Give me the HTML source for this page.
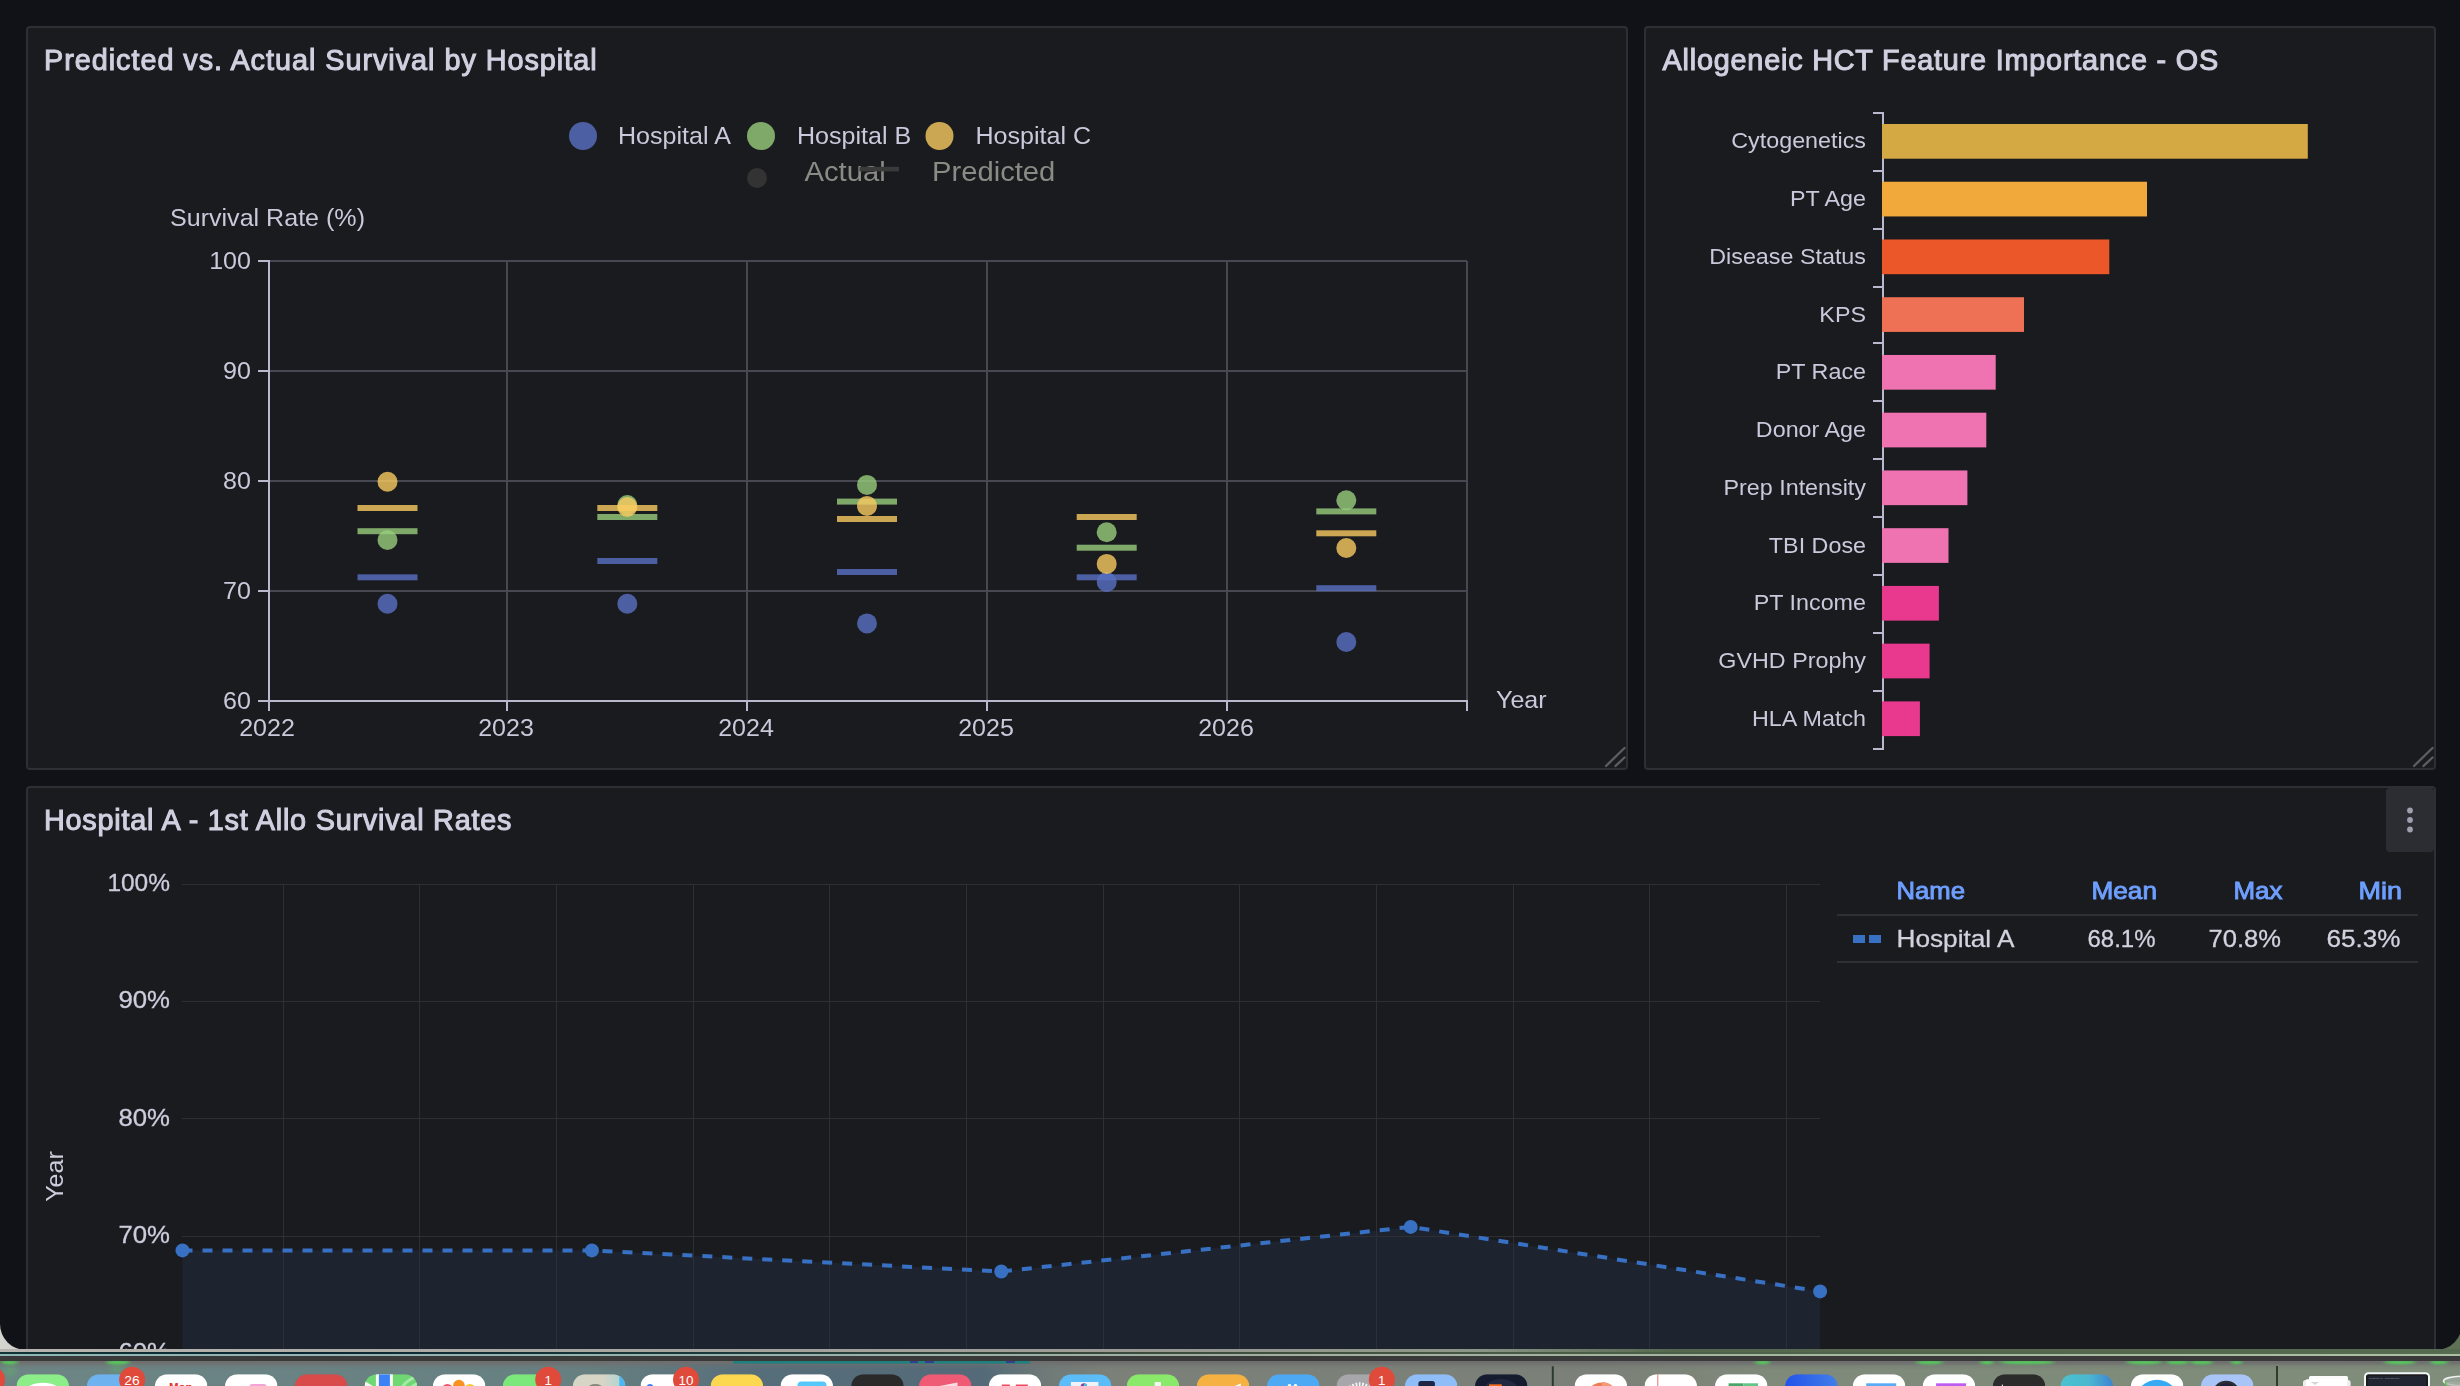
<!DOCTYPE html>
<html lang="en">
<head>
<meta charset="utf-8">
<title>Survival Dashboard</title>
<style>
  html, body { margin: 0; padding: 0; }
  body {
    width: 2460px; height: 1386px; overflow: hidden; position: relative;
    background: #6f7f79;
    font-family: "Liberation Sans", sans-serif;
    color: #ccccdc;
  }
  /* desktop strip visible under the browser window */
  #desk {
    position: absolute; left: 0; top: 1300px; width: 2460px; height: 56px;
    background: linear-gradient(90deg, #d3d3cf 0px, #c9c9c4 60px, #a7aaa4 300px, #8f9a94 700px, #6f8582 1100px, #66786f 1500px, #56694f 1900px, #5d7157 2460px);
  }
  #win {
    position: absolute; left: 0; top: 0; width: 2462px; height: 1349.5px;
    background: #111217; overflow: hidden;
    border-radius: 0 0 26px 26px;
    will-change: transform;
  }
  .panel {
    position: absolute; box-sizing: border-box;
    background: #1a1b1f; border: 2px solid #2d2f34; border-radius: 4px;
  }
  .ptitle {
    position: absolute; left: 16px; top: 15px; white-space: nowrap;
    font-size: 28.8px; font-weight: 400; line-height: 34px; color: #d0d0e0;
    -webkit-text-stroke: 1.05px #d0d0e0; paint-order: stroke fill;
  }
  #t1 { letter-spacing: 0.97px; }
  #t2 { letter-spacing: 0.80px; margin-left: 0.5px; }
  #t3 { letter-spacing: 0.78px; }
  svg { position: absolute; left: 0; top: 0; overflow: visible; }
  svg text { font-family: "Liberation Sans", sans-serif; }
</style>
</head>
<body>
<div id="desk"></div>
<div id="win">

  <!-- PANEL 1 -->
  <div class="panel" id="p1" style="left:26px;top:26px;width:1602px;height:744px">
    <div class="ptitle" id="t1">Predicted vs. Actual Survival by Hospital</div>
    <!--P1S-->
<svg id="s1" style="left:-28px;top:-28px" width="2460" height="1386" viewBox="0 0 2460 1386">
<g stroke="#484852" stroke-width="2" shape-rendering="crispEdges">
<line x1="507" y1="261" x2="507" y2="701"/>
<line x1="747" y1="261" x2="747" y2="701"/>
<line x1="987" y1="261" x2="987" y2="701"/>
<line x1="1227" y1="261" x2="1227" y2="701"/>
<line x1="1467" y1="261" x2="1467" y2="701"/>
<line x1="269" y1="261" x2="1467" y2="261"/>
<line x1="269" y1="371" x2="1467" y2="371"/>
<line x1="269" y1="481" x2="1467" y2="481"/>
<line x1="269" y1="591" x2="1467" y2="591"/>
</g>
<g stroke="#b9b9cd" stroke-width="2" shape-rendering="crispEdges">
<line x1="269" y1="260" x2="269" y2="702"/>
<line x1="268" y1="701" x2="1468" y2="701"/>
<line x1="258" y1="261" x2="268" y2="261"/>
<line x1="258" y1="371" x2="268" y2="371"/>
<line x1="258" y1="481" x2="268" y2="481"/>
<line x1="258" y1="591" x2="268" y2="591"/>
<line x1="258" y1="701" x2="268" y2="701"/>
<line x1="269" y1="701" x2="269" y2="711"/>
<line x1="507" y1="701" x2="507" y2="711"/>
<line x1="747" y1="701" x2="747" y2="711"/>
<line x1="987" y1="701" x2="987" y2="711"/>
<line x1="1227" y1="701" x2="1227" y2="711"/>
<line x1="1467" y1="701" x2="1467" y2="711"/>
</g>
<g fill="#c9c9db">
<text transform="translate(251,269.1) scale(1.045,1)" font-size="24" text-anchor="end">100</text>
<text transform="translate(251,379.1) scale(1.045,1)" font-size="24" text-anchor="end">90</text>
<text transform="translate(251,489.1) scale(1.045,1)" font-size="24" text-anchor="end">80</text>
<text transform="translate(251,599.1) scale(1.045,1)" font-size="24" text-anchor="end">70</text>
<text transform="translate(251,709.1) scale(1.045,1)" font-size="24" text-anchor="end">60</text>
<text transform="translate(267,735.7) scale(1.045,1)" font-size="24" text-anchor="middle">2022</text>
<text transform="translate(506,735.7) scale(1.045,1)" font-size="24" text-anchor="middle">2023</text>
<text transform="translate(746,735.7) scale(1.045,1)" font-size="24" text-anchor="middle">2024</text>
<text transform="translate(986,735.7) scale(1.045,1)" font-size="24" text-anchor="middle">2025</text>
<text transform="translate(1226,735.7) scale(1.045,1)" font-size="24" text-anchor="middle">2026</text>
<text transform="translate(170,225.7) scale(1.045,1)" font-size="24">Survival Rate (%)</text>
<text transform="translate(1496,707.5) scale(1.045,1)" font-size="24">Year</text>
</g>
<g fill="#c9c9db">
<circle cx="583" cy="136" r="14" fill="#5971c4" fill-opacity=".8"/><text transform="translate(618,143.8) scale(1.045,1)" font-size="24">Hospital A</text>
<circle cx="761" cy="136" r="14" fill="#97cd7c" fill-opacity=".8"/><text transform="translate(797,143.8) scale(1.045,1)" font-size="24">Hospital B</text>
<circle cx="939.5" cy="136" r="14" fill="#f9ca60" fill-opacity=".8"/><text transform="translate(975.5,143.8) scale(1.045,1)" font-size="24">Hospital C</text>
</g>
<g fill="#8b8b86">
<circle cx="757" cy="178" r="10" fill="#333333"/><text transform="translate(804.5,181.3) scale(1.043,1)" font-size="28">Actual</text>
<rect x="859.5" y="166.8" width="39.5" height="4.6" fill="#3a3a3a"/><text transform="translate(932,181.3) scale(1.043,1)" font-size="28">Predicted</text>
</g>
<g fill-opacity=".8">
<rect x="357.5" y="574.3" width="60" height="6" fill="#5971c4"/>
<circle cx="387.5" cy="603.7" r="10" fill="#5971c4"/>
<rect x="357.5" y="528.2" width="60" height="6" fill="#97cd7c"/>
<circle cx="387.5" cy="540.0" r="10" fill="#97cd7c"/>
<rect x="357.5" y="505.0" width="60" height="6" fill="#f9ca60"/>
<circle cx="387.5" cy="481.8" r="10" fill="#f9ca60"/>
<rect x="597.3" y="558.0" width="60" height="6" fill="#5971c4"/>
<circle cx="627.3" cy="603.7" r="10" fill="#5971c4"/>
<rect x="597.3" y="514.0" width="60" height="6" fill="#97cd7c"/>
<circle cx="627.3" cy="505.0" r="10" fill="#97cd7c"/>
<rect x="597.3" y="505.0" width="60" height="6" fill="#f9ca60"/>
<circle cx="627.3" cy="507.0" r="10" fill="#f9ca60"/>
<rect x="837.0" y="569.0" width="60" height="6" fill="#5971c4"/>
<circle cx="867.0" cy="623.4" r="10" fill="#5971c4"/>
<rect x="837.0" y="498.6" width="60" height="6" fill="#97cd7c"/>
<circle cx="867.0" cy="484.9" r="10" fill="#97cd7c"/>
<rect x="837.0" y="516.0" width="60" height="6" fill="#f9ca60"/>
<circle cx="867.0" cy="505.9" r="10" fill="#f9ca60"/>
<rect x="1076.7" y="574.3" width="60" height="6" fill="#5971c4"/>
<circle cx="1106.7" cy="582.0" r="10" fill="#5971c4"/>
<rect x="1076.7" y="544.7" width="60" height="6" fill="#97cd7c"/>
<circle cx="1106.7" cy="532.2" r="10" fill="#97cd7c"/>
<rect x="1076.7" y="514.0" width="60" height="6" fill="#f9ca60"/>
<circle cx="1106.7" cy="563.9" r="10" fill="#f9ca60"/>
<rect x="1316.3" y="585.2" width="60" height="6" fill="#5971c4"/>
<circle cx="1346.3" cy="642.0" r="10" fill="#5971c4"/>
<rect x="1316.3" y="508.4" width="60" height="6" fill="#97cd7c"/>
<circle cx="1346.3" cy="500.2" r="10" fill="#97cd7c"/>
<rect x="1316.3" y="530.3" width="60" height="6" fill="#f9ca60"/>
<circle cx="1346.3" cy="548.0" r="10" fill="#f9ca60"/>
</g>
<g stroke="#5b5d62" stroke-width="2.4" stroke-linecap="round"><line x1="1606" y1="766" x2="1624.5" y2="748"/><line x1="1615.5" y1="766" x2="1624.5" y2="757.5"/></g>
</svg>
<!--P1E-->
  </div>

  <!-- PANEL 2 -->
  <div class="panel" id="p2" style="left:1644px;top:26px;width:792px;height:744px">
    <div class="ptitle" id="t2">Allogeneic HCT Feature Importance - OS</div>
    <!--P2S-->
<svg id="s2" style="left:-1646px;top:-28px" width="2460" height="1386" viewBox="0 0 2460 1386">
<g stroke="#b9b9cd" stroke-width="2" shape-rendering="crispEdges">
<line x1="1883" y1="112" x2="1883" y2="750"/>
<line x1="1873" y1="113" x2="1883" y2="113"/>
<line x1="1873" y1="171" x2="1883" y2="171"/>
<line x1="1873" y1="229" x2="1883" y2="229"/>
<line x1="1873" y1="287" x2="1883" y2="287"/>
<line x1="1873" y1="343" x2="1883" y2="343"/>
<line x1="1873" y1="401" x2="1883" y2="401"/>
<line x1="1873" y1="459" x2="1883" y2="459"/>
<line x1="1873" y1="517" x2="1883" y2="517"/>
<line x1="1873" y1="575" x2="1883" y2="575"/>
<line x1="1873" y1="633" x2="1883" y2="633"/>
<line x1="1873" y1="691" x2="1883" y2="691"/>
<line x1="1873" y1="749" x2="1883" y2="749"/>
</g>
<rect x="1882" y="124.00" width="425.8" height="34.7" fill="#d4a843"/>
<rect x="1882" y="181.74" width="265.0" height="34.7" fill="#f2a93b"/>
<rect x="1882" y="239.48" width="227.3" height="34.7" fill="#ec5729"/>
<rect x="1882" y="297.22" width="142.0" height="34.7" fill="#ee7156"/>
<rect x="1882" y="354.96" width="113.7" height="34.7" fill="#ee73b0"/>
<rect x="1882" y="412.70" width="104.3" height="34.7" fill="#ee73b0"/>
<rect x="1882" y="470.44" width="85.4" height="34.7" fill="#ee73b0"/>
<rect x="1882" y="528.18" width="66.5" height="34.7" fill="#ee73b0"/>
<rect x="1882" y="585.92" width="56.9" height="34.7" fill="#e9398f"/>
<rect x="1882" y="643.66" width="47.6" height="34.7" fill="#e9398f"/>
<rect x="1882" y="701.40" width="37.9" height="34.7" fill="#e9398f"/>
<g fill="#c9c9db" font-size="22.7" text-anchor="end">
<text transform="translate(1866,148.4) scale(1.027,1)">Cytogenetics</text>
<text transform="translate(1866,206.2) scale(1.027,1)">PT Age</text>
<text transform="translate(1866,263.9) scale(1.027,1)">Disease Status</text>
<text transform="translate(1866,321.7) scale(1.027,1)">KPS</text>
<text transform="translate(1866,379.4) scale(1.027,1)">PT Race</text>
<text transform="translate(1866,437.1) scale(1.027,1)">Donor Age</text>
<text transform="translate(1866,494.9) scale(1.027,1)">Prep Intensity</text>
<text transform="translate(1866,552.6) scale(1.027,1)">TBI Dose</text>
<text transform="translate(1866,610.4) scale(1.027,1)">PT Income</text>
<text transform="translate(1866,668.1) scale(1.027,1)">GVHD Prophy</text>
<text transform="translate(1866,725.9) scale(1.027,1)">HLA Match</text>
</g>
<g stroke="#5b5d62" stroke-width="2.4" stroke-linecap="round"><line x1="2414" y1="766" x2="2432.5" y2="748"/><line x1="2423.5" y1="766" x2="2432.5" y2="757.5"/></g>
</svg>
<!--P2E-->
  </div>

  <!-- PANEL 3 -->
  <div class="panel" id="p3" style="left:26px;top:786px;width:2410px;height:620px">
    <div class="ptitle" id="t3">Hospital A - 1st Allo Survival Rates</div>
    <!--P3S-->
<svg id="s3" style="left:-28px;top:-788px" width="2460" height="1386" viewBox="0 0 2460 1386">
<polygon points="182.5,1250.4 591.9,1250.4 1001.3,1271.5 1410.7,1226.9 1820.1,1291.4 1820.1,1400 182.5,1400" fill="#3871c4" fill-opacity=".1"/>
<g fill="#2d2f34" shape-rendering="crispEdges">
<rect x="182" y="884" width="1638" height="1"/>
<rect x="182" y="1001" width="1638" height="1"/>
<rect x="182" y="1118" width="1638" height="1"/>
<rect x="182" y="1236" width="1638" height="1"/>
<rect x="182" y="1353" width="1638" height="1"/>
<rect x="283" y="884" width="1" height="516"/>
<rect x="419" y="884" width="1" height="516"/>
<rect x="556" y="884" width="1" height="516"/>
<rect x="693" y="884" width="1" height="516"/>
<rect x="829" y="884" width="1" height="516"/>
<rect x="966" y="884" width="1" height="516"/>
<rect x="1103" y="884" width="1" height="516"/>
<rect x="1239" y="884" width="1" height="516"/>
<rect x="1376" y="884" width="1" height="516"/>
<rect x="1513" y="884" width="1" height="516"/>
<rect x="1649" y="884" width="1" height="516"/>
<rect x="1786" y="884" width="1" height="516"/>
</g>
<path d="M182.5 1250.4 L591.9 1250.4 L1001.3 1271.5 L1410.7 1226.9 L1820.1 1291.4" fill="none" stroke="#3871c4" stroke-width="4" stroke-dasharray="10 10"/>
<circle cx="182.5" cy="1250.4" r="7" fill="#3871c4"/>
<circle cx="591.9" cy="1250.4" r="7" fill="#3871c4"/>
<circle cx="1001.3" cy="1271.5" r="7" fill="#3871c4"/>
<circle cx="1410.7" cy="1226.9" r="7" fill="#3871c4"/>
<circle cx="1820.1" cy="1291.4" r="7" fill="#3871c4"/>
<g fill="#ccccdc" stroke="#ccccdc" stroke-width="0.3" font-size="24" text-anchor="end">
<text x="170" y="891.1" textLength="62.6" lengthAdjust="spacingAndGlyphs">100%</text>
<text x="170" y="1008.4" textLength="51.6" lengthAdjust="spacingAndGlyphs">90%</text>
<text x="170" y="1125.8" textLength="51.6" lengthAdjust="spacingAndGlyphs">80%</text>
<text x="170" y="1243.1" textLength="51.6" lengthAdjust="spacingAndGlyphs">70%</text>
<text x="170" y="1360.4" textLength="51.6" lengthAdjust="spacingAndGlyphs">60%</text>
</g>
<text transform="translate(63,1176.5) rotate(-90)" text-anchor="middle" font-size="24" fill="#ccccdc" textLength="50.5" lengthAdjust="spacingAndGlyphs">Year</text>
<g font-size="24.5" fill="#6e9fff" stroke="#6e9fff" stroke-width="0.9" lengthAdjust="spacingAndGlyphs">
<text x="1896.5" y="899" textLength="68.5" lengthAdjust="spacingAndGlyphs">Name</text>
<text x="2157" y="899" text-anchor="end" textLength="65.5" lengthAdjust="spacingAndGlyphs">Mean</text>
<text x="2282.5" y="899" text-anchor="end" textLength="49" lengthAdjust="spacingAndGlyphs">Max</text>
<text x="2402" y="899" text-anchor="end" textLength="43.5" lengthAdjust="spacingAndGlyphs">Min</text>
</g>
<g fill="#2e3036"><rect x="1837" y="914" width="581" height="2"/><rect x="1837" y="961" width="581" height="2"/></g>
<rect x="1853" y="935" width="12" height="8" fill="#3871c4"/><rect x="1869" y="935" width="12" height="8" fill="#3871c4"/>
<g font-size="24.5" fill="#d2d2df" stroke="#d2d2df" stroke-width="0.3">
<text x="1896.5" y="947.3" textLength="118" lengthAdjust="spacingAndGlyphs">Hospital A</text>
<text x="2155.5" y="947.3" text-anchor="end" textLength="68" lengthAdjust="spacingAndGlyphs">68.1%</text>
<text x="2281" y="947.3" text-anchor="end" textLength="72.5" lengthAdjust="spacingAndGlyphs">70.8%</text>
<text x="2400.5" y="947.3" text-anchor="end" textLength="74" lengthAdjust="spacingAndGlyphs">65.3%</text>
</g>
<rect x="2386" y="788" width="48" height="64" rx="4" fill="#2c2d33"/>
<g fill="#9e9eaf"><circle cx="2410" cy="810.5" r="2.9"/><circle cx="2410" cy="820" r="2.9"/><circle cx="2410" cy="829.5" r="2.9"/></g>
</svg>
<!--P3E-->
  </div>

</div>
<!--DKS-->
<svg id="dock" style="left:0;top:0;pointer-events:none" width="2460" height="1386" viewBox="0 0 2460 1386">
<defs>
<linearGradient id="dkbg" x1="0" y1="0" x2="2460" y2="0" gradientUnits="userSpaceOnUse">
<stop offset="0" stop-color="#6d8585"/><stop offset=".24" stop-color="#667f80"/><stop offset=".31" stop-color="#566d7a"/><stop offset=".40" stop-color="#546a78"/><stop offset=".425" stop-color="#6f7a78"/><stop offset=".45" stop-color="#7b8078"/><stop offset=".66" stop-color="#7b8178"/><stop offset=".72" stop-color="#7f8a7a"/><stop offset="1" stop-color="#7f8d7a"/>
</linearGradient>
<linearGradient id="dktop" x1="0" y1="1361" x2="0" y2="1370" gradientUnits="userSpaceOnUse">
<stop offset="0" stop-color="#6e6e6e" stop-opacity="1"/><stop offset=".3" stop-color="#6f6f6f" stop-opacity=".85"/><stop offset=".55" stop-color="#707070" stop-opacity=".3"/><stop offset="1" stop-color="#707070" stop-opacity="0"/>
</linearGradient>
<linearGradient id="line1" x1="0" y1="0" x2="2460" y2="0" gradientUnits="userSpaceOnUse">
<stop offset="0" stop-color="#b8b5b0"/><stop offset=".45" stop-color="#9c9b95"/><stop offset=".6" stop-color="#8c9687"/><stop offset=".68" stop-color="#56684f"/><stop offset="1" stop-color="#566a4f"/>
</linearGradient>
<linearGradient id="line2" x1="0" y1="0" x2="2460" y2="0" gradientUnits="userSpaceOnUse">
<stop offset="0" stop-color="#123434"/><stop offset=".12" stop-color="#0a2532"/><stop offset=".3" stop-color="#1c3a3a"/><stop offset=".45" stop-color="#3a4a3c"/><stop offset=".7" stop-color="#4e6249"/><stop offset="1" stop-color="#576c51"/>
</linearGradient>
<linearGradient id="line3" x1="0" y1="0" x2="2460" y2="0" gradientUnits="userSpaceOnUse">
<stop offset="0" stop-color="#8fb5b5"/><stop offset=".3" stop-color="#98b2ae"/><stop offset=".5" stop-color="#a0aea0"/><stop offset="1" stop-color="#abc0a0"/>
</linearGradient>
<filter id="gb" x="-20%" y="-200%" width="140%" height="500%"><feGaussianBlur stdDeviation="2.2 1.1"/></filter>
<filter id="gb2" x="-50%" y="-50%" width="200%" height="200%"><feGaussianBlur stdDeviation="3"/></filter>
<clipPath id="dclip"><rect x="0" y="1361" width="2460" height="25"/></clipPath>
</defs>
<rect x="0" y="1349" width="2460" height="3.2" fill="url(#line1)"/>
<rect x="0" y="1352" width="2460" height="2.2" fill="url(#line2)"/>
<rect x="0" y="1354" width="2460" height="2.2" fill="url(#line3)"/>
<rect x="0" y="1356" width="2460" height="5" fill="#393939"/>
<rect x="0" y="1361" width="2460" height="25" fill="url(#dkbg)"/>
<rect x="0" y="1361" width="2460" height="9" fill="url(#dktop)"/>
<rect x="733" y="1361" width="297" height="2.6" fill="#20807e"/>
<g fill="#3a2f9a" opacity=".8"><rect x="910" y="1361" width="8" height="2"/><rect x="925" y="1361" width="9" height="2"/><rect x="1006" y="1361" width="9" height="2"/></g>
<g fill="#55cc5c" filter="url(#gb)" clip-path="url(#dclip)">
<ellipse cx="9.5" cy="1362.3" rx="8.5" ry="1.9"/>
<ellipse cx="118.0" cy="1362.3" rx="12.0" ry="1.9"/>
<ellipse cx="1762.5" cy="1362.3" rx="7.5" ry="1.9"/>
<ellipse cx="1929.5" cy="1362.3" rx="13.5" ry="1.9"/>
<ellipse cx="1987.0" cy="1362.3" rx="7.0" ry="1.9"/>
<ellipse cx="2027.0" cy="1362.3" rx="28.0" ry="1.9"/>
<ellipse cx="2144.0" cy="1362.3" rx="18.0" ry="1.9"/>
<ellipse cx="2177.5" cy="1362.3" rx="11.5" ry="1.9"/>
<ellipse cx="2201.5" cy="1362.3" rx="11.5" ry="1.9"/>
<ellipse cx="2236.5" cy="1362.3" rx="5.5" ry="1.9"/>
<ellipse cx="2400.0" cy="1362.3" rx="16.0" ry="1.9"/>
<ellipse cx="2439.0" cy="1362.3" rx="9.0" ry="1.9"/>
</g>
<g fill="#55cc5c" opacity=".3" filter="url(#gb2)"><ellipse cx="10" cy="1371" rx="7" ry="6"/><ellipse cx="117" cy="1368" rx="8" ry="5"/></g>
<g clip-path="url(#dclip)">
<clipPath id="ic1"><rect x="16.5" y="1374.2" width="52.5" height="52.5" rx="12.5"/></clipPath>
<g clip-path="url(#ic1)"><rect x="16.5" y="1374.2" width="52.5" height="20" fill="#8bee88"/><ellipse cx="43.0" cy="1401.8" rx="22.5" ry="17.5" fill="none" stroke="#fff" stroke-width="3.2"/></g>
<clipPath id="ic2"><rect x="86.8" y="1374.2" width="52.5" height="52.5" rx="12.5"/></clipPath>
<g clip-path="url(#ic2)"><rect x="86.8" y="1374.2" width="52.5" height="20" fill="#6eb3ef"/></g>
<clipPath id="ic3"><rect x="154.9" y="1374.2" width="52.5" height="52.5" rx="12.5"/></clipPath>
<g clip-path="url(#ic3)"><rect x="154.9" y="1374.2" width="52.5" height="20" fill="#ffffff"/><text x="180.7" y="1391.2" text-anchor="middle" font-size="11.5" font-weight="700" fill="#e8352c">Mon</text></g>
<clipPath id="ic4"><rect x="225.0" y="1374.2" width="52.5" height="52.5" rx="12.5"/></clipPath>
<g clip-path="url(#ic4)"><rect x="225.0" y="1374.2" width="52.5" height="20" fill="#ffffff"/><rect x="249.5" y="1384" width="17" height="8" rx="2.5" fill="#f3a6d6"/></g>
<clipPath id="ic5"><rect x="294.9" y="1374.2" width="52.5" height="52.5" rx="12.5"/></clipPath>
<g clip-path="url(#ic5)"><rect x="294.9" y="1374.2" width="52.5" height="20" fill="#d94a4a"/></g>
<clipPath id="ic6"><rect x="364.6" y="1374.2" width="52.5" height="52.5" rx="12.5"/></clipPath>
<g clip-path="url(#ic6)"><rect x="364.6" y="1374.2" width="52.5" height="20" fill="#6fd873"/><path d="M364.6 1381 L374.6 1387 L364.6 1392 Z" fill="#f4f4f0"/><rect x="375.9" y="1374.2" width="17" height="14" fill="#f7f7f3"/><rect x="378.9" y="1374.2" width="11" height="14" fill="#3b82f6"/><circle cx="422.6" cy="1400" r="24" fill="none" stroke="#a5eaa7" stroke-width="3"/><circle cx="422.6" cy="1400" r="17" fill="none" stroke="#a5eaa7" stroke-width="3"/></g>
<clipPath id="ic7"><rect x="432.9" y="1374.2" width="52.5" height="52.5" rx="12.5"/></clipPath>
<g clip-path="url(#ic7)"><rect x="432.9" y="1374.2" width="52.5" height="20" fill="#ffffff"/><circle cx="458.9" cy="1385.5" r="5.8" fill="#f7931e"/><circle cx="447.4" cy="1389.5" r="5.6" fill="#f2546a"/><circle cx="469.9" cy="1389.5" r="5.6" fill="#f7c92e"/></g>
<clipPath id="ic8"><rect x="502.8" y="1374.2" width="52.5" height="52.5" rx="12.5"/></clipPath>
<g clip-path="url(#ic8)"><rect x="502.8" y="1374.2" width="52.5" height="20" fill="#7ce87c"/></g>
<linearGradient id="ct" x1="573" y1="0" x2="625" y2="0" gradientUnits="userSpaceOnUse"><stop offset="0" stop-color="#d6d5c6"/><stop offset=".6" stop-color="#d6d5c6"/><stop offset=".88" stop-color="#b5d5d0"/></linearGradient>
<clipPath id="ic9"><rect x="572.8" y="1374.2" width="52.5" height="52.5" rx="12.5"/></clipPath>
<g clip-path="url(#ic9)"><rect x="572.8" y="1374.2" width="52.5" height="20" fill="url(#ct)"/><rect x="619.3" y="1374.2" width="8" height="14" fill="#4ab8f5"/><ellipse cx="595.3" cy="1389" rx="8" ry="5" fill="#8a877e"/></g>
<clipPath id="ic10"><rect x="640.5" y="1374.2" width="52.5" height="52.5" rx="12.5"/></clipPath>
<g clip-path="url(#ic10)"><rect x="640.5" y="1374.2" width="52.5" height="20" fill="#ffffff"/><circle cx="650.0" cy="1387.5" r="3.4" fill="#3b7cf7"/></g>
<clipPath id="ic11"><rect x="710.6" y="1374.2" width="52.5" height="52.5" rx="12.5"/></clipPath>
<g clip-path="url(#ic11)"><rect x="710.6" y="1374.2" width="52.5" height="20" fill="#fbd84f"/></g>
<clipPath id="ic12"><rect x="780.5" y="1374.2" width="52.5" height="52.5" rx="12.5"/></clipPath>
<g clip-path="url(#ic12)"><rect x="780.5" y="1374.2" width="52.5" height="20" fill="#ffffff"/><rect x="797.5" y="1381.5" width="29" height="12" rx="4" fill="#55c8fa"/></g>
<clipPath id="ic13"><rect x="851.2" y="1374.2" width="52.5" height="52.5" rx="12.5"/></clipPath>
<g clip-path="url(#ic13)"><rect x="851.2" y="1374.2" width="52.5" height="20" fill="#2a2a2a"/></g>
<clipPath id="ic14"><rect x="919.0" y="1374.2" width="52.5" height="52.5" rx="12.5"/></clipPath>
<g clip-path="url(#ic14)"><rect x="919.0" y="1374.2" width="52.5" height="20" fill="#ef5a74"/><path d="M938.5 1386.2 L957.5 1382.4 L957.5 1387 L938.5 1387 Z" fill="#fbdde2"/></g>
<clipPath id="ic15"><rect x="988.8" y="1374.2" width="52.5" height="52.5" rx="12.5"/></clipPath>
<g clip-path="url(#ic15)"><rect x="988.8" y="1374.2" width="52.5" height="20" fill="#ffffff"/><rect x="1001.8" y="1384.5" width="8" height="3" fill="#f04a5e"/><rect x="1015.8" y="1384.5" width="12" height="3" fill="#f04a5e"/></g>
<clipPath id="ic16"><rect x="1058.9" y="1374.2" width="52.5" height="52.5" rx="12.5"/></clipPath>
<g clip-path="url(#ic16)"><rect x="1058.9" y="1374.2" width="52.5" height="20" fill="#5bbcf7"/><rect x="1070.9" y="1382" width="27.5" height="6" fill="#eef2f8"/><circle cx="1083.9" cy="1386.5" r="3.2" fill="#8a3fa0"/><path d="M1083.9 1386.5 L1083.9 1383.3 A3.2 3.2 0 0 1 1087.1 1386.5 Z" fill="#46c0e8"/></g>
<clipPath id="ic17"><rect x="1126.7" y="1374.2" width="52.5" height="52.5" rx="12.5"/></clipPath>
<g clip-path="url(#ic17)"><rect x="1126.7" y="1374.2" width="52.5" height="20" fill="#8ae86a"/><rect x="1154.7" y="1382" width="6.2" height="6" fill="#f5f5f5"/></g>
<clipPath id="ic18"><rect x="1196.8" y="1374.2" width="52.5" height="52.5" rx="12.5"/></clipPath>
<g clip-path="url(#ic18)"><rect x="1196.8" y="1374.2" width="52.5" height="20" fill="#f5b243"/><path d="M1234.3 1386.2 L1240.8 1383.4 L1240.8 1387 L1234.3 1387 Z" fill="#fff"/></g>
<clipPath id="ic19"><rect x="1267.0" y="1374.2" width="52.5" height="52.5" rx="12.5"/></clipPath>
<g clip-path="url(#ic19)"><rect x="1267.0" y="1374.2" width="52.5" height="20" fill="#4ea9f5"/><circle cx="1289.5" cy="1385.7" r="1.8" fill="#fff"/><circle cx="1295.5" cy="1385.7" r="1.8" fill="#fff"/></g>
<clipPath id="ic20"><rect x="1336.5" y="1374.2" width="52.5" height="52.5" rx="12.5"/></clipPath>
<g clip-path="url(#ic20)"><rect x="1336.5" y="1374.2" width="52.5" height="20" fill="#a6a6ab"/><circle cx="1359.5" cy="1399" r="14.5" fill="none" stroke="#f4f4f4" stroke-width="4.5" stroke-dasharray="1.7 1.5"/><circle cx="1359.5" cy="1399" r="11.5" fill="#e9e9ea"/></g>
<clipPath id="ic21"><rect x="1404.9" y="1374.2" width="52.5" height="52.5" rx="12.5"/></clipPath>
<g clip-path="url(#ic21)"><rect x="1404.9" y="1374.2" width="52.5" height="20" fill="#8fbdf7"/><rect x="1418.4" y="1381" width="16.5" height="10" rx="2.5" fill="#1e2544"/></g>
<clipPath id="ic22"><rect x="1475.0" y="1374.2" width="52.5" height="52.5" rx="12.5"/></clipPath>
<g clip-path="url(#ic22)"><rect x="1475.0" y="1374.2" width="52.5" height="20" fill="#161c30"/><ellipse cx="1501.0" cy="1388" rx="16" ry="9" fill="#252d45" opacity=".8"/><rect x="1489.0" y="1384.3" width="12.8" height="4" fill="#f06a1a"/></g>
<rect x="1551.8" y="1366.3" width="2" height="22" fill="#2e3a2c"/>
<clipPath id="ic23"><rect x="1574.6" y="1374.2" width="52.5" height="52.5" rx="12.5"/></clipPath>
<g clip-path="url(#ic23)"><rect x="1574.6" y="1374.2" width="52.5" height="20" fill="#ffffff"/><circle cx="1601.9" cy="1399" r="16.5" fill="#ee7d55"/><path d="M1601.9 1399 L1601.9 1382 A17 17 0 0 1 1614.6 1388 Z" fill="#f39a78"/></g>
<clipPath id="ic24"><rect x="1644.5" y="1374.2" width="52.5" height="52.5" rx="12.5"/></clipPath>
<g clip-path="url(#ic24)"><rect x="1644.5" y="1374.2" width="52.5" height="20" fill="#ffffff"/><rect x="1657.3" y="1374.2" width="1" height="14" fill="#f07070"/></g>
<clipPath id="ic25"><rect x="1715.0" y="1374.2" width="52.5" height="52.5" rx="12.5"/></clipPath>
<g clip-path="url(#ic25)"><rect x="1715.0" y="1374.2" width="52.5" height="20" fill="#ffffff"/><rect x="1728.6" y="1383.3" width="14.7" height="5" fill="#4aa56a"/><rect x="1743.3" y="1383.3" width="14.8" height="5" fill="#62c486"/></g>
<linearGradient id="bl" x1="1785" y1="1386" x2="1837" y2="1374" gradientUnits="userSpaceOnUse"><stop offset="0" stop-color="#2152ea"/><stop offset="1" stop-color="#437fe8"/></linearGradient>
<clipPath id="ic26"><rect x="1785.1" y="1374.2" width="52.5" height="52.5" rx="12.5"/></clipPath>
<g clip-path="url(#ic26)"><rect x="1785.1" y="1374.2" width="52.5" height="20" fill="url(#bl)"/></g>
<clipPath id="ic27"><rect x="1852.8" y="1374.2" width="52.5" height="52.5" rx="12.5"/></clipPath>
<g clip-path="url(#ic27)"><rect x="1852.8" y="1374.2" width="52.5" height="20" fill="#ffffff"/><rect x="1866.2" y="1383.3" width="30" height="5" fill="#5aabf5"/></g>
<clipPath id="ic28"><rect x="1922.7" y="1374.2" width="52.5" height="52.5" rx="12.5"/></clipPath>
<g clip-path="url(#ic28)"><rect x="1922.7" y="1374.2" width="52.5" height="20" fill="#ffffff"/><rect x="1936.1" y="1383.3" width="30" height="5" fill="#bd5df2"/></g>
<clipPath id="ic29"><rect x="1992.8" y="1374.2" width="52.5" height="52.5" rx="12.5"/></clipPath>
<g clip-path="url(#ic29)"><rect x="1992.8" y="1374.2" width="52.5" height="20" fill="#2b2b2b"/><rect x="2001.8" y="1384.6" width="1.2" height="3" fill="#ddd"/></g>
<linearGradient id="tl" x1="2060" y1="0" x2="2112" y2="0" gradientUnits="userSpaceOnUse"><stop offset="0" stop-color="#49c2d0"/><stop offset=".55" stop-color="#4bb8cf"/><stop offset="1" stop-color="#3f86d2"/></linearGradient>
<clipPath id="ic30"><rect x="2060.5" y="1374.2" width="52.5" height="52.5" rx="12.5"/></clipPath>
<g clip-path="url(#ic30)"><rect x="2060.5" y="1374.2" width="52.5" height="20" fill="url(#tl)"/></g>
<clipPath id="ic31"><rect x="2130.9" y="1374.2" width="52.5" height="52.5" rx="12.5"/></clipPath>
<g clip-path="url(#ic31)"><rect x="2130.9" y="1374.2" width="52.5" height="20" fill="#ffffff"/><circle cx="2157.1" cy="1401.9" r="22.2" fill="#35aaf3"/></g>
<clipPath id="ic32"><rect x="2201.0" y="1374.2" width="52.5" height="52.5" rx="12.5"/></clipPath>
<g clip-path="url(#ic32)"><rect x="2201.0" y="1374.2" width="52.5" height="20" fill="#a9c5f8"/><circle cx="2226.2" cy="1395" r="13" fill="#20203a" stroke="#2c2c34" stroke-width="2.5"/></g>
<rect x="2276" y="1366" width="2" height="22" fill="#2f3b2c"/>
<rect x="2309" y="1376" width="39" height="14" rx="1.5" fill="#fcfcfc"/><rect x="2303" y="1380" width="47.6" height="10" rx="2.5" fill="#eeeeee"/><rect x="2306" y="1379.3" width="41" height="10" rx="1" fill="#ffffff"/><path d="M2311 1382 l8 0 l-4 3 z" fill="#d5d5d5"/>
<rect x="2365" y="1373.2" width="64" height="20" rx="3.5" fill="#1b1b1d" stroke="#f1f6f6" stroke-width="2"/><rect x="2368" y="1376" width="58" height="14" fill="#212532"/>
<text x="2369" y="1378.8" font-size="2.4" fill="#9a9aa5">Predicted vs. Actual Survival</text>
<ellipse cx="2463" cy="1381" rx="19.5" ry="4.8" fill="#98a398" stroke="#f0f0f0" stroke-width="1.6"/><rect x="2445" y="1382" width="20" height="6" fill="#a4aea2" opacity=".7"/><rect x="2445" y="1381" width="1.5" height="6" fill="#59c24f"/>
<circle cx="-8" cy="1379.7" r="13" fill="#e04a3b"/>
<circle cx="132.1" cy="1379.7" r="13" fill="#e04a3b"/><text x="132.1" y="1384.7" text-anchor="middle" font-size="13.4" fill="#ffffff" textLength="15.5" lengthAdjust="spacingAndGlyphs">26</text>
<circle cx="548.2" cy="1379.7" r="13" fill="#e04a3b"/><text x="548.2" y="1384.7" text-anchor="middle" font-size="13.4" fill="#ffffff">1</text>
<circle cx="686" cy="1379.7" r="13" fill="#e04a3b"/><text x="686" y="1384.7" text-anchor="middle" font-size="13.4" fill="#ffffff" textLength="15" lengthAdjust="spacingAndGlyphs">10</text>
<circle cx="1381.8" cy="1379.7" r="13" fill="#e04a3b"/><text x="1381.8" y="1384.7" text-anchor="middle" font-size="13.4" fill="#ffffff">1</text>
</g>
</svg>
<!--DKE-->
</body>
</html>
